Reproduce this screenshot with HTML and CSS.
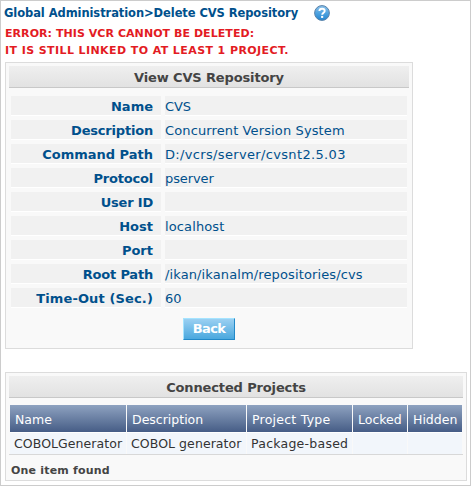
FILE: index.html
```html
<!DOCTYPE html>
<html lang="en">
<head>
<meta charset="utf-8">
<title>Delete CVS Repository</title>
<link rel="stylesheet" href="styles.css">
</head>
<body>
<main class="page">
  <header class="crumbs"><span class="crumb-text">Global Administration&gt;Delete CVS Repository</span>
    <svg class="help" viewBox="0 0 16 16" aria-hidden="true">
      <defs><linearGradient id="ball" x1="0" y1="0" x2="0" y2="1"><stop offset="0" stop-color="#8fc4ec"/><stop offset=".5" stop-color="#4fa3e0"/><stop offset="1" stop-color="#2385cf"/></linearGradient></defs>
      <circle cx="8" cy="8" r="7.4" fill="url(#ball)" stroke="#5b82a8" stroke-width="1"/>
      <path d="M5.4 6.1C5.4 4.4 6.5 3.7 8.1 3.7S10.7 4.6 10.7 5.9C10.7 7.6 8.2 7.7 8.2 9.7" fill="none" stroke="#fff" stroke-width="1.9"/>
      <rect x="7.1" y="10.9" width="2.1" height="2" fill="#fff"/>
    </svg>
  </header>
  <p class="error"><span class="e1">ERROR: THIS VCR CANNOT BE DELETED:</span><br><span class="e2">IT IS STILL LINKED TO AT LEAST 1 PROJECT.</span></p>
  <section class="panel details">
    <h2><span>View CVS Repository</span></h2>
    <dl>
      <dt>Name</dt><dd>CVS</dd>
      <dt class="tight">Description</dt><dd class="wide">Concurrent Version System</dd>
      <dt>Command Path</dt><dd class="wider">D:/vcrs/server/cvsnt2.5.03</dd>
      <dt class="tight">Protocol</dt><dd>pserver</dd>
      <dt class="tight">User ID</dt><dd></dd>
      <dt>Host</dt><dd class="wide">localhost</dd>
      <dt>Port</dt><dd></dd>
      <dt class="tight">Root Path</dt><dd class="wide">/ikan/ikanalm/repositories/cvs</dd>
      <dt class="loose">Time-Out (Sec.)</dt><dd>60</dd>
    </dl>
    <button class="back" type="button">Back</button>
  </section>
  <section class="panel projects">
    <h2><span>Connected Projects</span></h2>
    <div class="grid">
      <div class="th">Name</div><div class="th">Description</div><div class="th wide">Project Type</div><div class="th">Locked</div><div class="th">Hidden</div>
      <div class="td">COBOLGenerator</div><div class="td">COBOL generator</div><div class="td wide">Package-based</div><div class="td"></div><div class="td"></div>
    </div>
    <p class="count">One item found</p>
  </section>
</main>
</body>
</html>
```

FILE: styles.css
```css
* { box-sizing: border-box; }
body, h2, p, dl, dd { margin: 0; }
body { font-family: Verdana, "DejaVu Sans", sans-serif; font-size: 13px; background: #fff; }
.page { width: 471px; height: 486px; border: 1px solid #ccc; padding: 3px 4px; overflow: hidden; }
.crumbs { display: flex; align-items: center; height: 18px; color: #00508c; font-size: 11.5px; font-weight: bold; white-space: nowrap; }
.crumb-text { width: 310px; margin-left: -1px; letter-spacing: -.08px; }
.help { width: 16px; height: 16px; flex: none; }
.error { height: 36px; margin: 3px 0 1px; color: #e31b23; font-size: 11px; font-weight: bold; line-height: 17px; white-space: nowrap; }
.e1 { letter-spacing: .06px; }
.e2 { letter-spacing: .41px; }
.panel { border: 1px solid #dcdcdc; background: #f9f9f9; padding: 3px; }
.details { width: 408px; height: 287px; }
.projects { width: 462px; height: 109px; margin-top: 23px; }
h2 { height: 22px; border-bottom: 1px solid #c8c8c8; background: linear-gradient(#efefef, #e2e2e2); color: #444; font-size: 13px; line-height: 23px; text-align: center; letter-spacing: -.14px; }
dl { display: grid; grid-template-columns: 150px 242px; column-gap: 4px; row-gap: 4px; grid-auto-rows: 20px; margin: 8px 2px 0; color: #00508c; line-height: 21px; white-space: nowrap; }
dt, dd { background: #f1f1f1; border-bottom: 1px solid #fff; }
dt { padding-right: 8px; text-align: right; font-weight: bold; }
dt.tight { letter-spacing: -.2px; }
dt.loose { letter-spacing: .13px; }
dd { letter-spacing: -.1px; }
dd.wide { letter-spacing: .12px; }
dd.wider { letter-spacing: .34px; }
.back { display: block; width: 52px; height: 22px; margin: 10px 0 0 174px; padding: 0; border: 1px solid; border-color: #a5e4ff #2389c8 #2389c8 #a5e4ff; background: linear-gradient(#9bd0f2, #4aa8de); color: #fff; font: bold 13px/20px Verdana, "DejaVu Sans", sans-serif; letter-spacing: -.6px; }
.grid { display: grid; grid-template-columns: 116px 119px 105px 54px 54px; grid-template-rows: 27px 22px; column-gap: 1px; margin-top: 7px; padding: 0 1px; border-bottom: 1px solid #d8d8d8; white-space: nowrap; row-gap: 0; height: 50px; }
.th { padding-left: 5px; background: linear-gradient(#8ea2c0, #465d86); color: #fff; font-size: 12.5px; line-height: 29px; }
.td { padding-left: 4px; border-top: 1px solid #fff; background: #f2f6fb; color: #333; line-height: 22px; font-size: 12.5px; letter-spacing: .07px; }
.th.wide, .td.wide { letter-spacing: .25px; }
.count { margin: 8px 0 0 2px; color: #444; font-size: 11px; font-weight: bold; line-height: 15px; letter-spacing: .2px; }
```
